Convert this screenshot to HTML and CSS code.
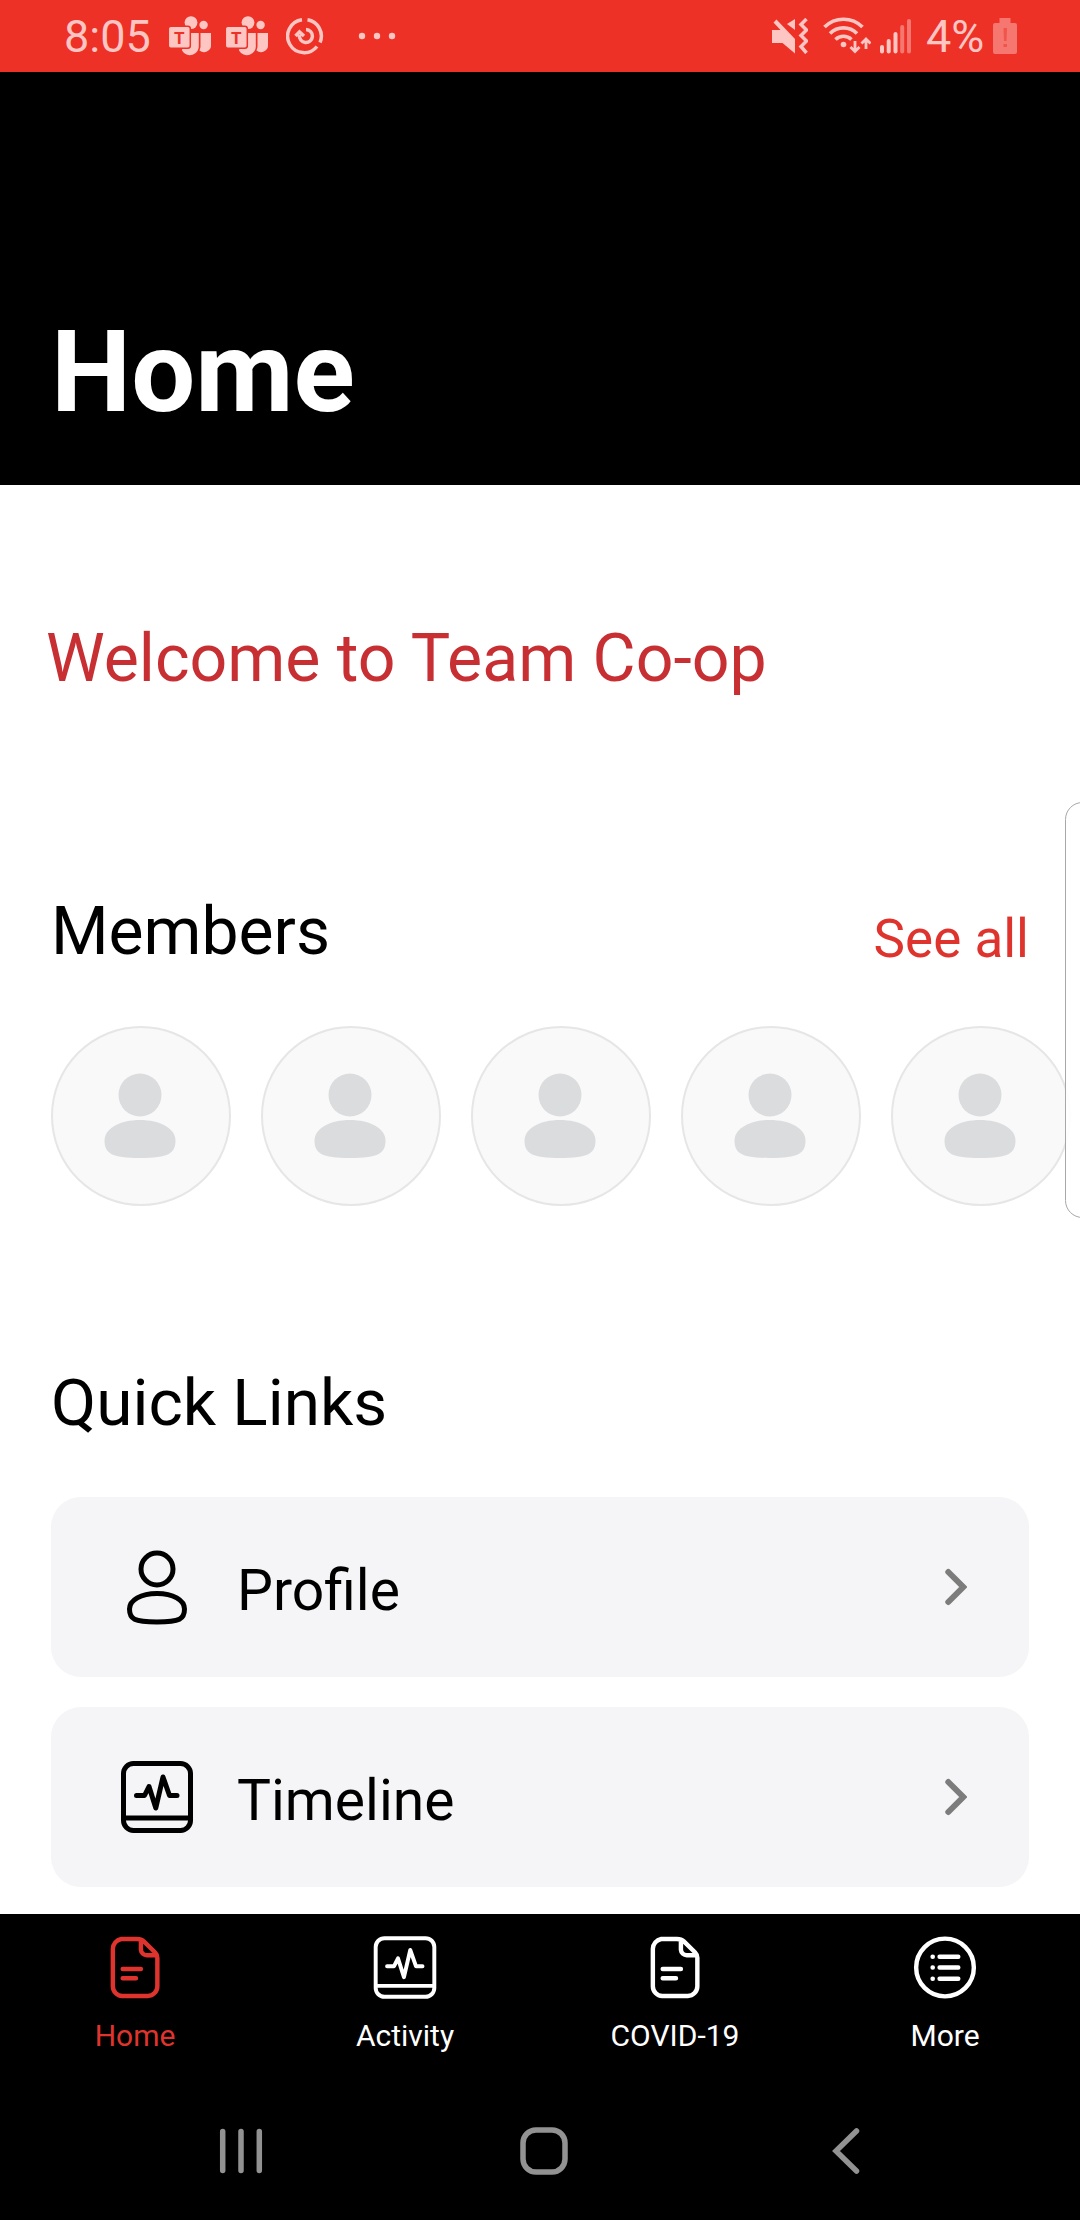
FILE: index.html
```html
<!DOCTYPE html>
<html lang="en">
<head>
    <meta charset="UTF-8">
    <meta name="viewport" content="width=device-width, initial-scale=1.0">
    <title>Team Co-op</title>
    <link rel="stylesheet" href="styles.css">
</head>
<body>
    <!-- Shared icons -->
    <svg class="icon-defs" width="0" height="0">
        <symbol id="icon-doc" viewBox="0 0 64 64">
            <path d="M34 3H18A10.500 10.500 0 0 0 9.500 13V51A10 10 0 0 0 19 61H45A10 10 0 0 0 54.700 51V22Q54.700 19 52.500 16.800L41 5.500Q38.500 3 34 3ZM38 4V14A6 6 0 0 0 44 19.500H54M19.500 33.500H38M19.500 43H33"/>
        </symbol>
        <symbol id="icon-pulse" viewBox="0 0 72 72">
            <rect x="2.500" y="2.500" width="67" height="67" rx="10"/>
            <path d="M3 57H69M15.500 34.500H23.500L28 25.500L34.800 47L42 16L48.500 34.500H56"/>
        </symbol>
        <symbol id="icon-person" viewBox="0 0 72 86">
            <circle cx="36" cy="22" r="21.500"/>
            <path d="M36 47C56 47 71.500 55.500 71.500 67.500C71.500 80 65 85 36 85C7 85 .5 80 .5 67.500C.5 55.500 16 47 36 47Z"/>
        </symbol>
        <symbol id="icon-chevron" viewBox="0 0 22 38">
            <path d="M3.300 4L18.300 19L3.300 34"/>
        </symbol>
    </svg>

    <div class="status-bar">
        <span class="time">8:05</span>
        <svg class="teams" viewBox="0 0 42 40">
            <circle cx="22" cy="6.6" r="6.4"/>
            <circle cx="34.6" cy="9" r="4.2"/>
            <path d="M31.5 17H42V28.5A7 7 0 0 1 30.5 34.5Q32 31.5 31.5 28Z"/>
            <path d="M15 17H29.8V29A9 9 0 0 1 13 34.5Z"/>
            <rect class="teams-tile" x="-.7" y="10.3" width="22" height="22" rx="2.5"/>
            <text class="teams-letter" x="10.3" y="27.5">T</text>
        </svg>
        <svg class="teams" viewBox="0 0 42 40">
            <circle cx="22" cy="6.6" r="6.4"/>
            <circle cx="34.6" cy="9" r="4.2"/>
            <path d="M31.5 17H42V28.5A7 7 0 0 1 30.5 34.5Q32 31.5 31.5 28Z"/>
            <path d="M15 17H29.8V29A9 9 0 0 1 13 34.5Z"/>
            <rect class="teams-tile" x="-.7" y="10.3" width="22" height="22" rx="2.5"/>
            <text class="teams-letter" x="10.3" y="27.5">T</text>
        </svg>
        <svg class="sync" viewBox="0 0 38 38">
            <path d="M16 2.800A16.500 16.500 0 1 0 31 29.500M21.500 2.700A16.500 16.500 0 0 1 34 25.500"/>
            <path d="M13.500 18A6.500 6.500 0 1 0 20 12.500M9.500 19L13.500 15L18 19"/>
        </svg>
        <svg class="dots" viewBox="0 0 38 8"><circle cx="4" cy="4" r="3.200"/><circle cx="19" cy="4" r="3.200"/><circle cx="34" cy="4" r="3.200"/></svg>

        <svg class="mute" viewBox="0 0 36 36">
            <path d="M0 12H8.500L1.500 4.500L4.500 1.500L23 21V35.500L10.500 25H0ZM23 1V12L15 6Z"/>
            <path class="wave" d="M34.500 1L29 6.500L34.500 12L29 17.500L34.500 23L29 28.500L34.500 35"/>
        </svg>
        <svg class="wifi" viewBox="0 0 48 38">
            <path d="M1.500 10A27 27 0 0 1 39.500 10M7 16.500A19 19 0 0 1 34 16.500M12.500 22.500A11.500 11.500 0 0 1 28.500 22.500"/>
            <circle cx="20.500" cy="27.500" r="2.800"/>
            <path class="arrows" d="M32 24V34M27.500 30L32 34.500L36.500 30M43 32V22M38.500 26.500L43 22L47.500 26.500"/>
        </svg>
        <svg class="signal" viewBox="0 0 32 36">
            <rect x="0" y="27" width="4" height="8.500" rx="2"/>
            <rect x="6.700" y="21" width="4" height="14.500" rx="2"/>
            <rect x="13.500" y="14" width="4" height="21.500" rx="2"/>
            <rect class="dim" x="20.200" y="7" width="4" height="28.500" rx="2"/>
            <rect class="dim" x="27" y="1" width="4" height="34.500" rx="2"/>
        </svg>
        <span class="percent">4%</span>
        <svg class="battery" viewBox="0 0 24 36">
            <path d="M6.500 0H17.500V5H22Q24 5 24 7V34Q24 36 22 36H2Q0 36 0 34V7Q0 5 2 5H6.500Z"/>
            <path class="mark" d="M10.500 10H14L13.500 23H11ZM10.500 26H14V29H10.500Z"/>
        </svg>
    </div>

    <div class="header">
        <h1>Home</h1>
    </div>

    <div class="content">
        <h2 class="welcome">Welcome to Team Co-op</h2>

        <div class="section-title">
            <h2>Members</h2>
            <a class="see-all">See all</a>
        </div>
        <div class="members">
            <div class="avatar"><svg><use href="#icon-person"/></svg></div>
            <div class="avatar"><svg><use href="#icon-person"/></svg></div>
            <div class="avatar"><svg><use href="#icon-person"/></svg></div>
            <div class="avatar"><svg><use href="#icon-person"/></svg></div>
            <div class="avatar"><svg><use href="#icon-person"/></svg></div>
        </div>

        <h2 class="links-title">Quick Links</h2>
        <div class="link-card">
            <svg class="link-icon" viewBox="0 0 72 76">
                <circle cx="36" cy="20" r="16"/>
                <path d="M36 44.500C52 44.500 63.500 51 63.500 60C63.500 70 59 73 36 73C13 73 8.500 70 8.500 60C8.500 51 20 44.500 36 44.500Z"/>
            </svg>
            <span>Profile</span>
            <svg class="chevron"><use href="#icon-chevron"/></svg>
        </div>
        <div class="link-card">
            <svg class="link-icon"><use href="#icon-pulse"/></svg>
            <span>Timeline</span>
            <svg class="chevron"><use href="#icon-chevron"/></svg>
        </div>
    </div>

    <!-- Samsung edge panel handle -->
    <div class="edge-panel"></div>

    <div class="tab-bar">
        <div class="tab active">
            <svg><use href="#icon-doc"/></svg>
            <span>Home</span>
        </div>
        <div class="tab">
            <svg><use href="#icon-pulse"/></svg>
            <span>Activity</span>
        </div>
        <div class="tab">
            <svg><use href="#icon-doc"/></svg>
            <span>COVID-19</span>
        </div>
        <div class="tab">
            <svg viewBox="0 0 64 64">
                <circle cx="32" cy="32" r="29.300"/>
                <path d="M26.500 21H45.500M26.500 32H45.500M26.500 43.500H45.500M19.400 21H19.600M19.400 32H19.600M19.400 43.500H19.600"/>
            </svg>
            <span>More</span>
        </div>
    </div>

    <div class="nav-bar">
        <svg viewBox="0 0 48 48"><path d="M5.700 4.500V43.500M24 4.500V43.500M42.300 4.500V43.500"/></svg>
        <svg viewBox="0 0 48 48"><rect x="3" y="3" width="42" height="42" rx="13"/></svg>
        <svg viewBox="0 0 48 48"><path d="M34.500 4L14 24L34.500 44"/></svg>
    </div>
</body>
</html>
```
FILE: styles.css
```css
* {
    box-sizing: border-box;
}

body {
    font-family: Roboto, sans-serif;
    margin: 0;
    width: 1080px;
    height: 2220px;
    display: flex;
    flex-direction: column;
    position: relative;
    overflow: hidden;
    background-color: #fff;
    color: #000;
}

h1, h2 {
    margin: 0;
}

svg {
    display: block;
    flex: none;
}

.icon-defs {
    position: absolute;
}

/* Status bar */
.status-bar {
    height: 72px;
    display: flex;
    align-items: center;
    padding: 0 63px 0 64px;
    background-color: #ee3126;
    color: #fdc6c3;
    fill: #fdc6c3;
}

.time {
    font-size: 45px;
    line-height: 72px;
    width: 105px;
    padding-top: 1px;
}

.teams {
    width: 42px;
    height: 40px;
    margin-right: 15px;
    overflow: visible;
}

.teams-tile {
    stroke: #ee3126;
    stroke-width: 1.5px;
}

.teams-letter {
    font-size: 17px;
    font-weight: bold;
    text-anchor: middle;
    fill: #ee3126;
}

.sync {
    width: 38px;
    height: 38px;
    margin-left: 3px;
    fill: none;
    stroke: #fdc6c3;
    stroke-width: 3.5px;
}

.dots {
    width: 38px;
    height: 8px;
    margin-left: 34px;
    margin-right: auto;
}

.mute {
    width: 36px;
    height: 36px;
    margin-right: 15px;
}

.wave {
    fill: none;
    stroke: #fdc6c3;
    stroke-width: 3.5px;
}

.wifi {
    width: 48px;
    height: 38px;
    margin-right: 9px;
}

.wifi path {
    fill: none;
    stroke: #fdc6c3;
    stroke-width: 3.6px;
}

.wifi .arrows {
    stroke-width: 2.8px;
}

.signal {
    width: 32px;
    height: 36px;
    margin-right: 14px;
}

.dim {
    fill: #f5776f;
}

.percent {
    font-size: 45px;
    line-height: 72px;
    width: 67px;
    padding-top: 1px;
}

.battery {
    width: 24px;
    height: 36px;
    fill: #f5776f;
}

.mark {
    fill: #f0544b;
}

/* Header */
.header {
    height: 413px;
    display: flex;
    align-items: flex-end;
    padding: 0 51px 45px;
    background-color: #000;
    color: #fff;
}

.header h1 {
    font-size: 113.5px;
    line-height: 134px;
    font-weight: bold;
}

/* Content */
.content {
    height: 1429px;
    padding: 135px 51px 0;
}

.content h2 {
    font-size: 66px;
    line-height: 78px;
    font-weight: normal;
}

.content .welcome {
    font-size: 66.2px;
    color: #c72f33;
    margin-left: -5px;
}

.section-title {
    display: flex;
    justify-content: space-between;
    align-items: flex-end;
    margin: 195px 0 55px;
}

.see-all {
    font-size: 53px;
    line-height: 64px;
    color: #df342e;
}

.members {
    display: flex;
    gap: 30px;
}

.avatar {
    flex: none;
    width: 180px;
    height: 180px;
    padding: 45px 0 0 51px;
    border: 2px solid #e6e6e7;
    border-radius: 50%;
    background-color: #f9f9f9;
}

.avatar svg {
    width: 72px;
    height: 86px;
    fill: #dbdcde;
}

.content .links-title {
    font-size: 65.7px;
    margin: 158px 0 55px;
}

.link-card {
    height: 180px;
    display: flex;
    align-items: center;
    padding: 0 62px 0 70px;
    margin-bottom: 30px;
    border-radius: 30px;
    background-color: #f5f5f7;
    font-size: 57px;
}

.link-card span {
    flex: 1;
    padding-top: 7px;
    margin-left: 44px;
}

.link-icon {
    width: 72px;
    height: 76px;
    fill: none;
    stroke: #000;
    stroke-width: 5px;
    stroke-linecap: round;
    stroke-linejoin: round;
}

.chevron {
    width: 22px;
    height: 38px;
    fill: none;
    stroke: #7c7c7d;
    stroke-width: 6px;
    stroke-linecap: round;
}

.edge-panel {
    position: absolute;
    top: 802px;
    right: -20px;
    width: 35px;
    height: 416px;
    border: 1.5px solid #a8a8a8;
    border-radius: 18px;
    background-color: rgba(255, 255, 255, 0.9);
}

/* Bottom tabs */
.tab-bar {
    height: 166px;
    display: flex;
    background-color: #000;
    color: #fff;
}

.tab {
    width: 270px;
    display: flex;
    flex-direction: column;
    align-items: center;
    padding-top: 22px;
    font-size: 30px;
    line-height: 36px;
}

.tab svg {
    width: 64px;
    height: 63px;
    margin-bottom: 19px;
    fill: none;
    stroke: currentColor;
    stroke-width: 4.5px;
    stroke-linecap: round;
    stroke-linejoin: round;
}

.tab.active {
    color: #df342e;
}

/* Android navigation */
.nav-bar {
    flex: 1;
    display: flex;
    justify-content: space-between;
    align-items: center;
    padding: 2px 210px 0 217px;
    background-color: #000;
}

.nav-bar svg {
    width: 48px;
    height: 48px;
    fill: none;
    stroke: #929292;
    stroke-width: 5.5px;
    stroke-linecap: round;
}
```
